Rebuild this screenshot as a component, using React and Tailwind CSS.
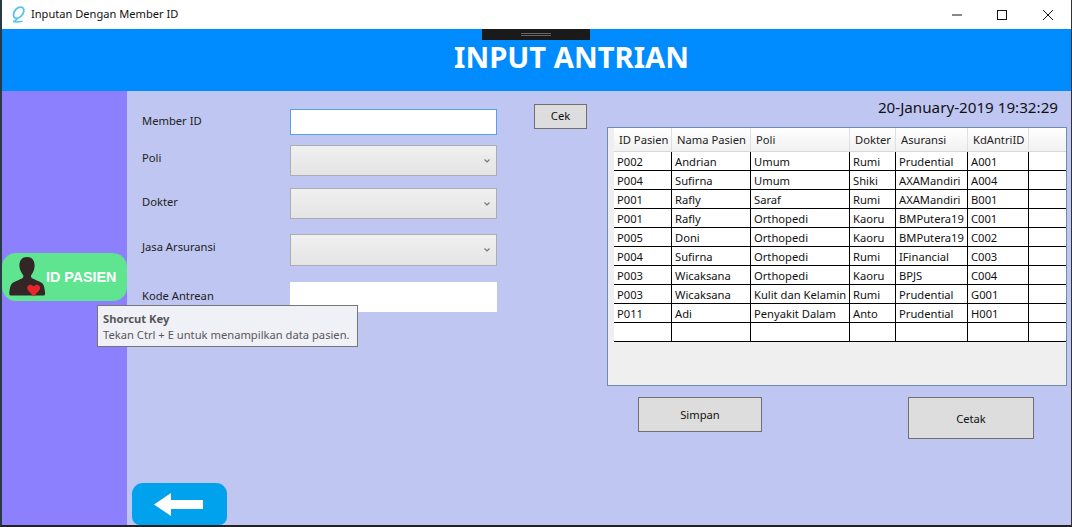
const FONT = "font-['Noto_Sans','Open_Sans',sans-serif]";

const ROWS = [
  ["P002", "Andrian", "Umum", "Rumi", "Prudential", "A001"],
  ["P004", "Sufirna", "Umum", "Shiki", "AXAMandiri", "A004"],
  ["P001", "Rafly", "Saraf", "Rumi", "AXAMandiri", "B001"],
  ["P001", "Rafly", "Orthopedi", "Kaoru", "BMPutera19", "C001"],
  ["P005", "Doni", "Orthopedi", "Kaoru", "BMPutera19", "C002"],
  ["P004", "Sufirna", "Orthopedi", "Rumi", "IFinancial", "C003"],
  ["P003", "Wicaksana", "Orthopedi", "Kaoru", "BPJS", "C004"],
  ["P003", "Wicaksana", "Kulit dan Kelamin", "Rumi", "Prudential", "G001"],
  ["P011", "Adi", "Penyakit Dalam", "Anto", "Prudential", "H001"],
  ["", "", "", "", "", ""],
];

const HEADERS = ["ID Pasien", "Nama Pasien", "Poli", "Dokter", "Asuransi", "KdAntriID", ""];
const COLS = "grid grid-cols-[58px_79px_99px_46px_72px_61px_38px]";

const AppIcon = () => (
  <svg width="14" height="17" viewBox="0 0 14 17" fill="none" className="shrink-0">
    <path
      d="M9 1.2C5.5 1 2.2 4 1.6 8c-.4 2.6 1 4.4 3 4.4 3 0 6.800-3.400 7.200-7.200.3-2.600-1-4-2.800-4Z"
      stroke="#56c4ee"
      strokeWidth="1.800"
    />
    <path d="M5.500 12.500C4.500 14 2.500 15.500 1 15.600c3 .6 6.500.2 9.500-.4" stroke="#56c4ee" strokeWidth="1.500" />
  </svg>
);

const PersonIcon = () => (
  <svg width="38" height="40" viewBox="0 0 38 42" className="shrink-0">
    <path
      d="M19 0c5 0 8 3.500 8 9 0 4-1.500 7.500-3.500 10-.6 1-.3 2.500.8 3.200 3 1.600 7 2.800 10 4.800 2 1.300 3.200 4 3.700 11 .2 1.500-.5 2.500-2 2.500H2.500C1 40.500 .2 39.500.4 38c.6-7 1.800-9.700 3.800-11 3-2 7-3.200 10-4.800 1-.7 1.300-2.200.7-3.200C13 16.500 11 13 11 9c0-5.500 3-9 8-9Z"
      fill="#322626"
    />
    <path
      d="M26 41.500 l-5.500-6c-1.500-1.700-1.700-4-.4-5.400 1.500-1.500 4-1.200 5.900.8 1.900-2 4.400-2.300 5.900-.8 1.300 1.400 1.100 3.700-.4 5.400Z"
      fill="#e8262c"
    />
  </svg>
);

const Chevron = () => (
  <svg width="6" height="4" viewBox="0 0 6 4" fill="none" className="shrink-0">
    <path d="M.5.5 3 3 5.500.5" stroke="#777" strokeWidth="1.200" />
  </svg>
);

const FormLabel = ({ children, className = "" }) => (
  <span className={`w-[148px] shrink-0 text-[11.2px] text-[#222] ${className}`}>{children}</span>
);

const Select = ({ height }) => (
  <div className={`flex w-[207px] items-center justify-end border border-[#adadad] bg-gradient-to-b from-[#f0f0f0] to-[#e4e4e4] pr-[6px] ${height}`}>
    <Chevron />
  </div>
);

const GrayButton = ({ children, className = "" }) => (
  <button className={`border border-[#707070] bg-[#dddddd] text-[11.2px] text-[#111] ${className}`}>{children}</button>
);

export default function App() {
  return (
    <div className={`relative flex h-[527px] w-[1072px] flex-col overflow-hidden border-b-2 border-l-2 border-r border-b-[#222] border-l-[#2a3a44] border-r-[#333] bg-white ${FONT}`}>
      {/* title bar */}
      <div className="flex h-[29px] shrink-0 items-center bg-white pl-[10px]">
        <AppIcon />
        <span className="ml-[5px] text-[11.1px] text-[#111]">Inputan Dengan Member ID</span>
        <div className="ml-auto flex items-center pr-[18px]">
          <svg width="10" height="2" viewBox="0 0 10 2" className="mr-[35px]">
            <path d="M0 1h10" stroke="#111" strokeWidth="1" />
          </svg>
          <svg width="10" height="10" viewBox="0 0 10 10" fill="none" className="mr-[36px]">
            <rect x="0.500" y="0.500" width="9" height="9" stroke="#111" />
          </svg>
          <svg width="10" height="10" viewBox="0 0 10 10" fill="none">
            <path d="M0 0l10 10M10 0 0 10" stroke="#111" />
          </svg>
        </div>
      </div>

      {/* blue header */}
      <div className="relative flex h-[62px] shrink-0 items-center justify-center bg-[#008cff] pb-[4px] pl-[70px]">
        <h1 className="text-[29.2px] font-bold leading-none text-white">
          INPUT ANTRIAN
        </h1>
        {/* dragged handle */}
        <div className="absolute left-[480px] top-0 flex h-[11px] w-[108px] items-center justify-center bg-[#1a1a1a]">
          <div className="h-[3px] w-[30px] border-y border-y-[#666]" />
        </div>
      </div>

      <div className="flex min-h-0 flex-1">
        {/* sidebar */}
        <div className="flex w-[125px] shrink-0 flex-col bg-[#8c80ff] pt-[162px]">
          <div className="flex h-[48px] items-center rounded-[14px] bg-[#5fe590] pl-[6px]">
            <PersonIcon />
            <span className="pt-[1px] font-['Liberation_Sans',sans-serif] text-[14.3px] font-bold text-white">ID PASIEN</span>
          </div>
        </div>

        {/* content */}
        <div className="flex min-w-0 flex-1 bg-[#bfc6f1]">
          <div className="flex w-[370px] shrink-0 flex-col pl-[15px] pt-[18px]">
            <div className="flex h-[26px] items-center">
              <FormLabel className="pb-[2px]">Member ID</FormLabel>
              <div className="h-[26px] w-[207px] border border-[#5b9fe6] bg-white" />
            </div>
            <div className="mt-[10px] flex h-[31px] items-center">
              <FormLabel className="pb-[5px]">Poli</FormLabel>
              <Select height="h-[31px]" />
            </div>
            <div className="mt-[12px] flex h-[31px] items-center">
              <FormLabel className="pb-[3px]">Dokter</FormLabel>
              <Select height="h-[31px]" />
            </div>
            <div className="mt-[15px] flex h-[32px] items-center">
              <FormLabel className="pb-[5px]">Jasa Arsuransi</FormLabel>
              <Select height="h-[32px]" />
            </div>
            <div className="mt-[16px] flex h-[30px] items-center">
              <FormLabel className="pb-[2px]">Kode Antrean</FormLabel>
              <div className="h-[30px] w-[207px] bg-white" />
            </div>
            <div className="-ml-[10px] mt-auto flex h-[42px] w-[95px] items-center justify-center rounded-b-[8px] rounded-t-[11px] bg-[#00a2ed] pr-[2px]">
              <svg width="49" height="23" viewBox="0 0 49 23">
                <path d="M0 11.500 17 0v7h32v9H17v7Z" fill="#fff" />
              </svg>
            </div>
          </div>

          <div className="flex w-[110px] shrink-0 items-start pl-[37px] pt-[13px]">
            <GrayButton className="h-[25px] w-[53px]">Cek</GrayButton>
          </div>

          <div className="flex w-[460px] shrink-0 flex-col">
            <div className="h-[36px] pr-[9px] pt-[5px] text-right text-[15.2px] leading-[22px] text-[#111]">20-January-2019 19:32:29</div>
            <div className="flex h-[259px] flex-col overflow-hidden border border-[#6f8cab] bg-[#efefef] text-[11.2px]">
              <div className={`${COLS} ml-[6px] h-[24px] border-b border-b-[#d8d8d8] bg-gradient-to-b from-white to-[#f1f1f1]`}>
                {HEADERS.map((h, i) => (
                  <div key={i} className="flex items-center whitespace-nowrap border-r border-r-[#e0e0e0] pl-[5px] pt-[1px] text-[#222]">
                    {h}
                  </div>
                ))}
              </div>
              <div className="flex flex-col">
                {ROWS.map((row, r) => (
                  <div key={r} className={`${COLS} ml-[6px] h-[19px] border-b border-b-black bg-white`}>
                    {[...row, ""].map((cell, c) => (
                      <div key={c} className={`flex items-center whitespace-nowrap pl-[3px] pt-[1px] leading-none text-[#111] ${c < 6 ? "border-r border-r-black" : ""}`}>
                        {cell}
                      </div>
                    ))}
                  </div>
                ))}
              </div>
            </div>
            <div className="mt-[11px] flex items-start">
              <GrayButton className="ml-[31px] h-[35px] w-[124px] pt-[1px]">Simpan</GrayButton>
              <GrayButton className="ml-[146px] h-[42px] w-[126px] pt-[2px]">Cetak</GrayButton>
            </div>
          </div>
        </div>
      </div>

      {/* tooltip */}
      <div className="absolute left-[95px] top-[305px] h-[42px] w-[261px] border border-[#767676] bg-[#f0f1f7] px-[5px] pt-[5px] text-[11.2px] leading-[16px] text-[#575757]">
        <div className="font-bold">Shorcut Key</div>
        <div className="whitespace-nowrap">Tekan Ctrl + E untuk menampilkan data pasien.</div>
      </div>
    </div>
  );
}
